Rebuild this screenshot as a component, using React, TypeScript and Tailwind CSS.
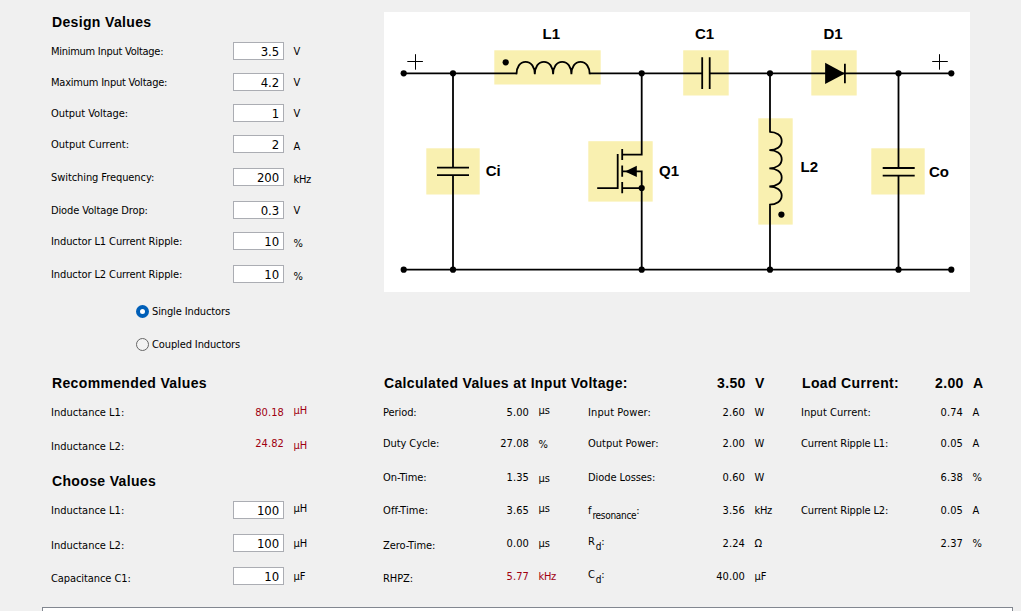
import { ReactNode, useState } from 'react';

const LABEL = "font-['DejaVu_Sans_Condensed','DejaVu_Sans',sans-serif] font-stretch-condensed text-[11px] leading-4 whitespace-pre";
const HEADING = "font-['Liberation_Sans',Arial,sans-serif] text-[14px] leading-4 font-bold tracking-[0.35px] whitespace-pre";

type Cell = { text: ReactNode; pad?: string; track?: string };

function Row({
  height,
  label,
  value,
  unit,
  cols,
  field,
  color = 'text-black',
}: {
  height: string;
  label: Cell;
  value: Cell;
  unit: Cell;
  cols: string;
  field?: boolean;
  color?: string;
}) {
  return (
    <div className={`grid items-start ${cols} ${height} ${LABEL}`}>
      <span className={`${label.pad ?? 'pt-[3px]'} ${label.track ?? 'tracking-[-0.08px]'}`}>{label.text}</span>
      {field ? (
        <input
          defaultValue={String(value.text)}
          className="mt-px h-[18px] w-[51px] justify-self-end border border-[#abadb3] bg-white pt-px pr-1 text-right font-['DejaVu_Sans_Condensed','DejaVu_Sans',sans-serif] text-[13px] leading-4 tracking-[-0.1px] text-black outline-none"
        />
      ) : (
        <span className={`text-right ${value.pad ?? 'pt-[3px]'} ${color} tracking-[0.1px]`}>{value.text}</span>
      )}
      <span className={`pl-[9.5px] ${unit.pad ?? 'pt-[3px]'} ${unit.track ?? ''} ${color}`}>{unit.text}</span>
    </div>
  );
}

const LEFT = 'grid-cols-[182px_51px_60px]';
const MID = 'grid-cols-[80px_66px_59px]';
const POWER = 'grid-cols-[90px_67px_56px]';
const LOAD = 'grid-cols-[102px_60px_50px]';

const inputs: [string, string, string, string, string, string][] = [
  ['Minimum Input Voltage:', '3.5', 'V', 'h-[31px]', 'pt-[3px]', 'tracking-[-0.27px]'],
  ['Maximum Input Voltage:', '4.2', 'V', 'h-[31px]', 'pt-[3px]', 'tracking-[-0.22px]'],
  ['Output Voltage:', '1', 'V', 'h-[31px]', 'pt-[3px]', 'tracking-[-0.05px]'],
  ['Output Current:', '2', 'A', 'h-[33px]', 'pt-[5px]', 'tracking-[0px]'],
  ['Switching Frequency:', '200', 'kHz', 'h-[33px]', 'pt-[5px]', 'tracking-[-0.08px]'],
  ['Diode Voltage Drop:', '0.3', 'V', 'h-[31px]', 'pt-[3px]', 'tracking-[-0.13px]'],
  ['Inductor L1 Current Ripple:', '10', '%', 'h-[33px]', 'pt-[5px]', 'tracking-[-0.1px]'],
  ['Inductor L2 Current Ripple:', '10', '%', 'h-[33px]', 'pt-[5px]', 'tracking-[-0.1px]'],
];

function Radio({ on, text, onClick }: { on: boolean; text: string; onClick: () => void }) {
  return (
    <button onClick={onClick} className={`flex h-[33px] items-start gap-[3px] ${LABEL}`}>
      <span
        className={
          on
            ? 'mt-[2px] size-[13px] rounded-full border-4 border-[#005fb8] bg-white'
            : 'mt-[2px] size-[13px] rounded-full border border-[#666666] bg-[#f3f3f3]'
        }
      />
      <span className="pt-px tracking-[-0.12px]">{text}</span>
    </button>
  );
}

function Subscript({ base, sub }: { base: string; sub: string }) {
  return (
    <>
      {base}
      <span className="inline-block translate-y-[5px] pl-px text-[10px] leading-none tracking-[-0.3px]">{sub}</span>:
    </>
  );
}

function Schematic() {
  const nodes: [number, number][] = [
    [403.7, 73.3], [453, 73.3], [641.7, 73.3], [770, 73.3], [898.5, 73.3], [951.3, 73.3],
    [403.7, 269.7], [453, 269.7], [641.7, 269.7], [770, 269.7], [898.5, 269.7], [951.3, 269.7],
    [505.7, 62.3], [641.7, 188], [781.4, 214.6],
  ];
  return (
    <svg viewBox="384 12 586 280" className="h-[280px] w-[586px] bg-white">
      <g fill="#f9f0b0">
        <rect x="494.3" y="50.3" width="106.4" height="34.2" />
        <rect x="683.2" y="50.3" width="45.5" height="45.2" />
        <rect x="811.3" y="50.3" width="45.4" height="45.2" />
        <rect x="588.3" y="141.2" width="64.4" height="60.4" />
        <rect x="758.3" y="118.3" width="34.4" height="106.3" />
        <rect x="426.3" y="148.3" width="53.4" height="46.2" />
        <rect x="871.3" y="148.3" width="53.4" height="46.2" />
      </g>
      <g fill="none" stroke="#000" strokeWidth="1.8">
        <path d="M403.7 73.4H517M589.5 73.4H702M710 73.4H951.3M403.7 269.6H951.3" />
        <path d="M453 73V167.6M453 175.2V270M898.5 73V168M898.5 175.6V270" />
        <path d="M516.5 74.2c0-7 3.4-12.4 9.1-12.4s9.2 5.4 9.2 12.4c0-7 3.4-12.4 9.1-12.4s9.2 5.4 9.2 12.4c0-7 3.4-12.4 9.1-12.4s9.2 5.4 9.2 12.4c0-7 3.4-12.4 9.1-12.4s9.2 5.4 9.2 12.4" />
        <path d="M770 73V132M769.3 131.9c7 0 12.4 3.4 12.4 9.1s-5.4 9.1-12.4 9.1c7 0 12.4 3.4 12.4 9.1s-5.4 9.1-12.4 9.1c7 0 12.4 3.4 12.4 9.1s-5.4 9.1-12.4 9.1c7 0 12.4 3.4 12.4 9.1s-5.4 9.1-12.4 9.1M770 204V270" />
        <path d="M702.2 57.3V89M709.7 57.3V89M844.9 63.7V83.3" />
        <path d="M437 167.6H469M437 175.2H469M882.7 168H914.7M882.7 175.6H914.7" />
        <path d="M641.7 73V154.7H622M622.2 149V160M622.2 165.5V176.7M622.2 182V193.3M622 171.4H641.7V270M622 188.1H641.7M597.2 188.1H617.7V154" />
      </g>
      <path d="M825.1 62.8L845 73.4L825.1 84Z" />
      <path d="M625 171.4L636.8 165.8V177Z" />
      <path d="M407.3 61.5H422.9M415.5 54.2V69.7M932.2 61.5H947.8M939.5 54.2V69.7" stroke="#000" strokeWidth="1" />
      {nodes.map(([x, y], i) => (
        <circle key={i} cx={x} cy={y} r="3.1" />
      ))}
      <g className="font-['Liberation_Sans',Arial,sans-serif] text-[15px] font-bold">
        <text x="542.5" y="39.3">L1</text>
        <text x="695" y="39.3">C1</text>
        <text x="823.5" y="39.3">D1</text>
        <text x="485.7" y="176">Ci</text>
        <text x="659" y="176">Q1</text>
        <text x="800.5" y="171.7">L2</text>
        <text x="929" y="176.7">Co</text>
      </g>
    </svg>
  );
}

export default function App() {
  const [coupled, setCoupled] = useState(false);
  return (
    <div className="flex h-[611px] w-[1021px] flex-col overflow-hidden bg-[#f0f0f0] text-black">
      <div className="flex h-[375px] shrink-0 pl-[51px]">
        <section className="w-[333px] pt-[14px]">
          <h2 className={`h-[27px] pl-px ${HEADING}`}>Design Values</h2>
          {inputs.map(([label, value, unit, height, pad, track]) => (
            <Row key={label} height={height} cols={LEFT} field label={{ text: label, track }} value={{ text: value }} unit={{ text: unit, pad, track: unit === 'kHz' ? 'tracking-[-0.3px]' : '' }} />
          ))}
          <div className="flex flex-col items-start pt-[6px] pl-[85px]">
            <Radio on={!coupled} text="Single Inductors" onClick={() => setCoupled(false)} />
            <Radio on={coupled} text="Coupled Inductors" onClick={() => setCoupled(true)} />
          </div>
        </section>
        <div className="pt-3">
          <Schematic />
        </div>
      </div>

      <div className="flex h-[232px] shrink-0 pl-[51px]">
        <section className="w-[332px]">
          <h2 className={`h-[27px] pl-px ${HEADING}`}>Recommended Values</h2>
          <Row height="h-[31px]" cols={LEFT} color="text-[#a00010]" label={{ text: 'Inductance L1:', track: 'tracking-[0px]' }} value={{ text: '80.18' }} unit={{ text: 'µH', pad: 'pt-px' }} />
          <Row height="h-[40px]" cols={LEFT} color="text-[#a00010]" label={{ text: 'Inductance L2:', pad: 'pt-[6px]', track: 'tracking-[0px]' }} value={{ text: '24.82' }} unit={{ text: 'µH', pad: 'pt-[5px]' }} />
          <h2 className={`h-[27px] pl-px ${HEADING}`}>Choose Values</h2>
          <Row height="h-[33px]" cols={LEFT} field label={{ text: 'Inductance L1:', track: 'tracking-[0px]' }} value={{ text: '100' }} unit={{ text: 'µH', pad: 'pt-px' }} />
          <Row height="h-[33px]" cols={LEFT} field label={{ text: 'Inductance L2:', pad: 'pt-[5px]', track: 'tracking-[0px]' }} value={{ text: '100' }} unit={{ text: 'µH' }} />
          <Row height="h-[33px]" cols={LEFT} field label={{ text: 'Capacitance C1:', pad: 'pt-[5px]' }} value={{ text: '10' }} unit={{ text: 'µF' }} />
        </section>

        <div className="flex flex-col">
          <div className={`flex h-[27px] pl-px ${HEADING}`}>
            <h2 className="w-[333px]">Calculated Values at Input Voltage:</h2>
            <span className="w-[38px]">3.50</span>
            <span className="w-[47px]">V</span>
            <h2 className="w-[133px]">Load Current:</h2>
            <span className="w-[38px]">2.00</span>
            <span>A</span>
          </div>
          <div className="flex">
            <section className="w-[205px]">
              <Row height="h-[31px]" cols={MID} label={{ text: 'Period:' }} value={{ text: '5.00' }} unit={{ text: 'µs', pad: 'pt-px' }} />
              <Row height="h-[34px]" cols={MID} label={{ text: 'Duty Cycle:' }} value={{ text: '27.08' }} unit={{ text: '%', pad: 'pt-[4px]' }} />
              <Row height="h-[33px]" cols={MID} label={{ text: 'On-Time:' }} value={{ text: '1.35' }} unit={{ text: 'µs', pad: 'pt-[4px]' }} />
              <Row height="h-[33px]" cols={MID} label={{ text: 'Off-Time:', track: 'tracking-[0.1px]' }} value={{ text: '3.65' }} unit={{ text: 'µs', pad: 'pt-px' }} />
              <Row height="h-[33px]" cols={MID} label={{ text: 'Zero-Time:', pad: 'pt-[5px]' }} value={{ text: '0.00' }} unit={{ text: 'µs' }} />
              <Row height="h-[33px]" cols={MID} color="text-[#a00010]" label={{ text: 'RHPZ:', pad: 'pt-[5px]' }} value={{ text: '5.77' }} unit={{ text: 'kHz', track: 'tracking-[-0.3px]' }} />
            </section>
            <section className="w-[213px]">
              <Row height="h-[31px]" cols={POWER} label={{ text: 'Input Power:', track: 'tracking-[0.1px]' }} value={{ text: '2.60' }} unit={{ text: 'W' }} />
              <Row height="h-[34px]" cols={POWER} label={{ text: 'Output Power:', track: 'tracking-[0px]' }} value={{ text: '2.00' }} unit={{ text: 'W' }} />
              <Row height="h-[33px]" cols={POWER} label={{ text: 'Diode Losses:' }} value={{ text: '0.60' }} unit={{ text: 'W' }} />
              <Row height="h-[33px]" cols={POWER} label={{ text: <Subscript base="f" sub="resonance" /> }} value={{ text: '3.56' }} unit={{ text: 'kHz', track: 'tracking-[-0.3px]' }} />
              <Row height="h-[33px]" cols={POWER} label={{ text: <Subscript base="R" sub="d" />, pad: 'pt-px' }} value={{ text: '2.24' }} unit={{ text: 'Ω' }} />
              <Row height="h-[33px]" cols={POWER} label={{ text: <Subscript base="C" sub="d" />, pad: 'pt-px' }} value={{ text: '40.00' }} unit={{ text: 'µF' }} />
            </section>
            <section>
              <Row height="h-[31px]" cols={LOAD} label={{ text: 'Input Current:', track: 'tracking-[0.05px]' }} value={{ text: '0.74' }} unit={{ text: 'A' }} />
              <Row height="h-[34px]" cols={LOAD} label={{ text: 'Current Ripple L1:', track: 'tracking-[-0.13px]' }} value={{ text: '0.05' }} unit={{ text: 'A' }} />
              <Row height="h-[33px]" cols={LOAD} label={{ text: '' }} value={{ text: '6.38' }} unit={{ text: '%' }} />
              <Row height="h-[33px]" cols={LOAD} label={{ text: 'Current Ripple L2:', track: 'tracking-[-0.13px]' }} value={{ text: '0.05' }} unit={{ text: 'A' }} />
              <Row height="h-[33px]" cols={LOAD} label={{ text: '' }} value={{ text: '2.37' }} unit={{ text: '%' }} />
            </section>
          </div>
        </div>
      </div>

      <div className="ml-[42px] h-10 w-[971px] shrink-0 border border-[#828790] bg-white" />
    </div>
  );
}
